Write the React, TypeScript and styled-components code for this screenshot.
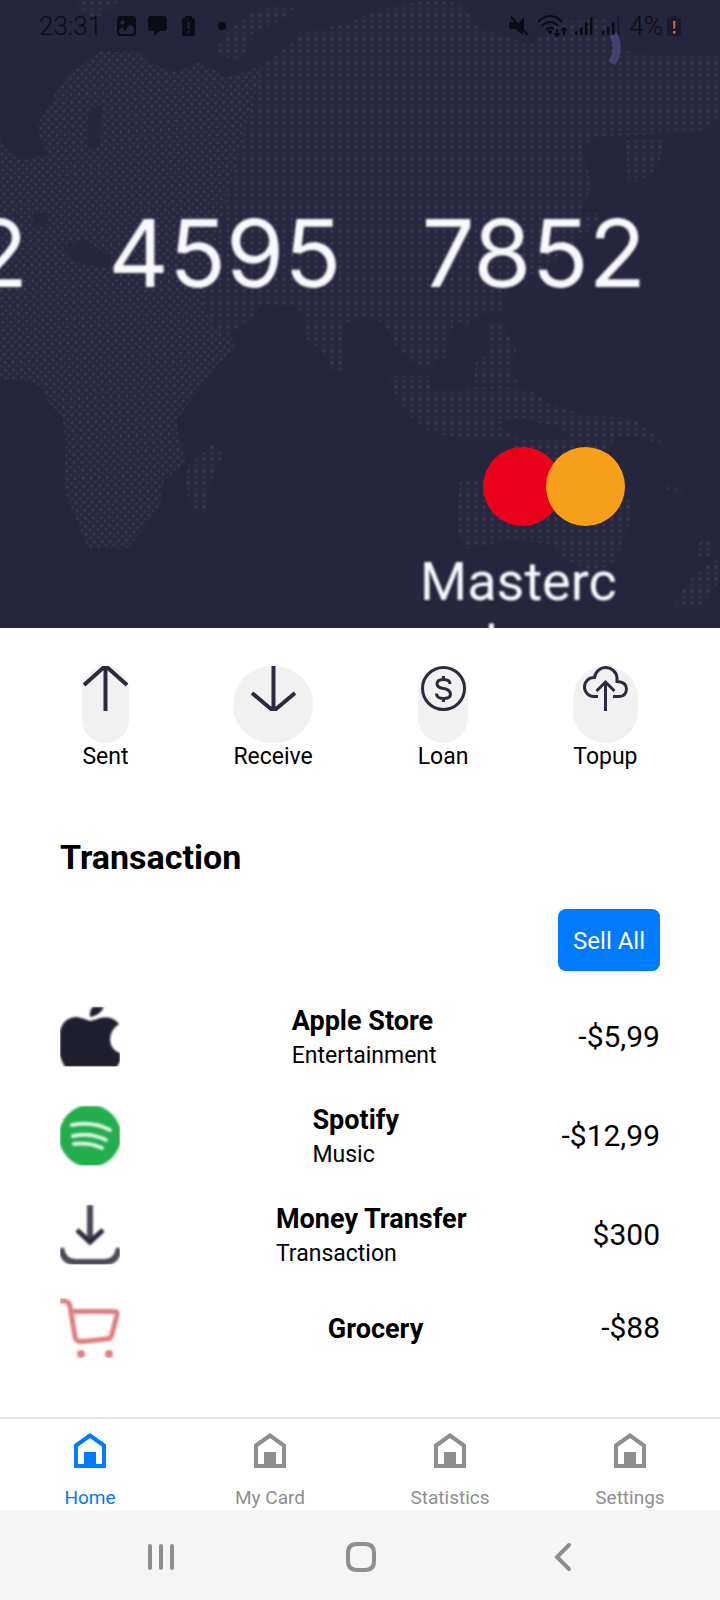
import React from "react";
import styled, { createGlobalStyle } from "styled-components";

const GlobalStyle = createGlobalStyle`
  * { box-sizing: border-box; }
  body { margin: 0; background: #fff; font-family: Roboto, "Liberation Sans", sans-serif; color: #000; }
  button { font: inherit; border: 0; background: none; padding: 0; color: inherit; cursor: pointer; }
  svg { display: block; }
`;

const Screen = styled.div`
  min-height: 100vh;
  display: flex;
  flex-direction: column;
`;

/* ---------- bank card ---------- */

const Card = styled.section`
  position: relative;
  height: 628px;
  overflow: hidden;
  background: #25253d;
  color: #f8f8fa;
  display: flex;
  flex-direction: column;
  align-items: flex-end;
`;

const MapLayer = styled.svg`
  position: absolute;
  inset: 0;
  width: 100%;
  height: 100%;
`;

const StatusBar = styled.header`
  position: absolute;
  top: 0;
  left: 0;
  right: 0;
  height: 52px;
  padding: 0 39px;
  display: flex;
  align-items: center;
  justify-content: space-between;
  color: #0c0c14;
  font-size: 26px;
  line-height: 30px;
  font-weight: 300;
`;

const StatusGroup = styled.div<{ $gap: number }>`
  display: flex;
  align-items: center;
  gap: ${(p) => p.$gap}px;
`;

const CardNumber = styled.div`
  position: relative;
  margin-top: 205px;
  padding-right: 74px;
  display: flex;
  gap: 80px;
  font-family: Inter, Roboto, sans-serif;
  font-size: 94px;
  line-height: 96px;
  filter: blur(1px);
`;

const Brand = styled.div`
  position: relative;
  width: 300px;
  margin-top: 146px;
`;

const BrandMark = styled.svg`
  margin-left: 63px;
`;

const BrandName = styled.div`
  width: 200px;
  margin-top: 24px;
  word-break: break-all;
  font-size: 54px;
  line-height: 64px;
  filter: blur(1px);
`;

const landEast =
  "M262 66L280 52 300 33 345 24 375 12 402 4 436 0 462 4 476 26 500 34 530 45 560 22 606 18 622 50 660 56 720 56V116L700 132 636 135 600 136 582 148 586 164 592 184 580 214 596 212 600 220 580 238 552 264 520 282 504 292 502 312 480 314 466 328 455 320 448 342 446 358 436 360 434 366 420 368 410 360 394 344 388 330 376 318 358 316 344 326 342 372 334 372 322 352 306 338 304 318 296 306 262 304 252 318 236 330 222 338 200 300Z";
const landWest =
  "M0 136L8 152 24 160 34 156 48 156 36 128 52 100 66 76 100 52 140 52 152 64 176 72 200 62 226 78 262 66 216 320 238 346 216 366 194 396 176 420 182 446 186 462 164 480 160 506 144 528 128 548 88 548 72 510 64 488 66 442 62 416 48 402 42 386 24 380 0 380Z";
const smallLands = [
  "M216 48L230 30 246 16 270 6 296 8 284 18 254 34 240 62 222 56Z",
  "M76 0H120L96 18 82 12Z",
  "M626 140H666L658 166 650 174 640 182H628Z",
  "M214 443L223 454 210 484 206 512 192 510 186 484 188 466Z",
  "M486 322H502L516 350 512 372 520 384 474 384 476 362 490 352Z",
  "M388 376H428L432 390 502 386 530 390 548 402 574 412 594 416 632 418 660 440 666 448 640 436 614 436 608 454 586 446 554 426 520 418 498 424 522 440 470 440 430 432 410 416 398 402Z",
  "M460 480H484L520 440 584 440 600 470 632 502 630 524 620 548 616 562 592 572 566 560 552 544 508 540 464 550 458 530 458 510Z",
  "M656 484H670L684 490 682 496Z",
  "M700 540H712V556H698Z",
  "M712 560L720 562V580L700 608 674 608 686 584Z",
];

const WorldMap = () => (
  <MapLayer viewBox="0 0 720 628" preserveAspectRatio="xMidYMid slice" aria-hidden="true">
    <defs>
      <pattern id="rows" width="8" height="12" patternUnits="userSpaceOnUse">
        <rect width="8" height="12" fill="#27273f" />
        <circle cx="4" cy="3" r="1.7" fill="#38384c" />
        <circle cx="4" cy="9" r="1.6" fill="#323248" />
      </pattern>
      <pattern id="weave" width="8" height="8" patternUnits="userSpaceOnUse" patternTransform="rotate(-3)">
        <rect width="8" height="8" fill="#27273f" />
        <circle cx="2" cy="2" r="1.6" fill="#3a3a4e" />
        <circle cx="6" cy="6" r="1.6" fill="#343449" />
      </pattern>
    </defs>
    <path d={landWest} fill="url(#weave)" />
    <path d={landEast} fill="url(#rows)" />
    {smallLands.map((d) => (
      <path key={d} d={d} fill="url(#rows)" />
    ))}
    <path d="M62 246L86 240 112 258 108 268 76 262Z M88 112L102 104 100 146 88 150Z M34 212L48 214 46 228 34 224Z" fill="#25253d" />
    <path d="M613 34Q621 48 612 63" fill="none" stroke="#484678" strokeWidth="8" opacity="0.85" />
  </MapLayer>
);

const Signal = ({ weak }: { weak?: boolean }) => (
  <svg width="19" height="20" viewBox="0 0 19 20" fill="currentColor">
    <rect x="0" y="15" width="2.5" height="4" rx="1" />
    <rect x="5" y="11" width="2.5" height="8" rx="1" />
    <rect x="10" y="6" width="2.5" height="13" rx="1" />
    <rect x="15" y="1" width="2.5" height="18" rx="1" opacity={weak ? 0.35 : 1} />
  </svg>
);

const Status = () => (
  <StatusBar>
    <StatusGroup $gap={14}>
      <span>23:31</span>
      <svg width="88" height="20" viewBox="0 0 88 20" fill="currentColor">
        <path fillRule="evenodd" d="M4 0H16Q20 0 20 4V16Q20 20 16 20H4Q1 20 1 16V4Q1 0 4 0ZM3 16Q3 18 5 18H16Q18 18 18 16V12L14 8 9 15 6 11 3 14ZM6.500 4.500A2 2 0 1 0 6.500 8.500A2 2 0 1 0 6.500 4.500Z" />
        <path d="M35 0H47Q51 0 51 4V12Q51 15 47 15H44L38 20V15H35Q32 15 32 12V4Q32 0 35 0Z" />
        <path fillRule="evenodd" d="M69 2V0H76V2H77Q79 2 79 4V18Q79 20 77 20H68Q66 20 66 18V4Q66 2 68 2ZM71.500 6V13H73.500V6ZM71.500 15V17H73.500V15Z" />
      </svg>
      <svg width="8" height="8" viewBox="0 0 8 8" fill="currentColor">
        <circle cx="4" cy="4" r="4" />
      </svg>
    </StatusGroup>
    <StatusGroup $gap={8}>
      <svg width="20" height="20" viewBox="0 0 20 20" fill="currentColor">
        <path d="M15 1V14L9 8ZM2 6H6L14 14V19L6 13H2Q0 13 0 11V8Q0 6 2 6Z" />
        <path d="M2 1L19 19" stroke="currentColor" strokeWidth="2" />
      </svg>
      <svg width="30" height="22" viewBox="0 0 30 22" fill="none" stroke="currentColor" strokeWidth="2">
        <path d="M1 7Q13 -5 25 7M5 11Q13 3 21 11M9 15Q13 11 17 14" />
        <circle cx="13" cy="17" r="1" />
        <path d="M20 14V21M17 18L20 21 23 18M27 20V13M24 16L27 13 30 16" />
      </svg>
      <Signal />
      <Signal weak />
      <StatusGroup $gap={4}>
        <span>4%</span>
        <svg width="14" height="20" viewBox="0 0 14 20">
          <path d="M4 0H10V2H12Q14 2 14 4V18Q14 20 12 20H2Q0 20 0 18V4Q0 2 2 2H4Z" fill="#1b1a28" />
          <path d="M6 5H8.500L8 13H6.500ZM6 15H8.500V17.500H6Z" fill="#c9694f" />
        </svg>
      </StatusGroup>
    </StatusGroup>
  </StatusBar>
);

/* ---------- quick actions ---------- */

const Actions = styled.nav`
  padding: 38px 30px 0;
  display: flex;
  justify-content: space-around;
`;

const Action = styled.button`
  display: flex;
  flex-direction: column;
  font-size: 23px;
  line-height: 28px;
`;

const ActionPill = styled.span`
  width: 100%;
  height: 77px;
  border-radius: 40px;
  background: #f1f1f1;
  display: flex;
  justify-content: center;
  align-items: flex-start;
`;

const IconSvg = styled.svg`
  fill: none;
  stroke: #2b2b3d;
  stroke-width: 3;
`;

const actions = [
  { label: "Sent", icon: <path d="M22.500 45V1M1 19L20 2Q22.500 0 25 2L44 19" strokeWidth="4" /> },
  { label: "Receive", icon: <path d="M22.500 0V44M1 27L20 43Q22.500 45 25 43L44 27" strokeWidth="4" /> },
  {
    label: "Loan",
    icon: (
      <>
        <circle cx="22.500" cy="22.500" r="21" />
        <path d="M29 18Q29 13.500 22.500 13.500T16 18Q16 21.500 22.500 22.500T29.500 28Q29.500 32.500 22.500 32.500T15.500 27.500M22.500 10V13M22.500 32V36" />
      </>
    ),
  },
  {
    label: "Topup",
    icon: (
      <>
        <path d="M15 30.500H11A9.500 9.500 0 0 1 11 11.500H11.500A11.300 11.300 0 0 1 34 12V15.500Q43.500 16 43.500 23Q43 30.500 36 30.500H30" />
        <path d="M22.500 45V16M13.500 25L22.500 16 31.500 25" />
      </>
    ),
  },
];

/* ---------- transactions ---------- */

const Transactions = styled.main`
  flex: 1;
  padding: 66px 60px 58px;
  display: flex;
  flex-direction: column;
`;

const Heading = styled.h1`
  margin: 0;
  font-size: 34px;
  line-height: 40px;
  font-weight: 700;
`;

const SellAll = styled.button`
  align-self: flex-end;
  margin-top: 32px;
  height: 62px;
  padding: 2px 15px 0;
  border-radius: 8px;
  background: #007aff;
  color: #fff;
  font-size: 24px;
`;

const List = styled.ul`
  list-style: none;
  margin: 30px 0 0;
  padding: 0;
  display: flex;
  flex-direction: column;
  gap: 28px;
`;

const Row = styled.li`
  display: flex;
  align-items: center;
  justify-content: space-between;
`;

const Thumb = styled.svg`
  flex: none;
  width: 60px;
  height: 60px;
  margin-right: 30px;
  filter: blur(1px);
  clip-path: inset(0);
`;

const Name = styled.div`
  padding-top: 2px;
  font-size: 27px;
  line-height: 36px;
  font-weight: 700;
`;

const Category = styled.div`
  font-size: 23px;
  line-height: 33px;
`;

const Amount = styled.div`
  font-size: 30px;
  line-height: 36px;
`;

const transactions = [
  {
    name: "Apple Store",
    category: "Entertainment",
    amount: "-$5,99",
    icon: (
      <g fill="#1f1e2c">
        <path d="M30 9Q29 3 35 -3H45Q42 8 30 10Z" />
        <path d="M30 14Q35 13 40 11Q52 8 59 17Q50 23 50 33Q51 44 62 47Q60 56 55 63H7Q-3 50 -1 30Q1 10 17 10Q23 11 30 14Z" />
      </g>
    ),
  },
  {
    name: "Spotify",
    category: "Music",
    amount: "-$12,99",
    icon: (
      <>
        <circle cx="30" cy="30" r="31" fill="#22ae4c" />
        <g fill="none" stroke="#d9f3e0" strokeLinecap="round">
          <path d="M12 19Q33 15 50 24" strokeWidth="4" />
          <path d="M13 30Q31 26 46 34" strokeWidth="4" />
          <path d="M14 38Q29 36 42 42" strokeWidth="4" />
        </g>
      </>
    ),
  },
  {
    name: "Money Transfer",
    category: "Transaction",
    amount: "$300",
    icon: (
      <g fill="none" stroke="#4a4958" strokeWidth="6">
        <path d="M30 -3V36" />
        <path d="M17 25L30 37 43 25" stroke="#2b2b3d" strokeWidth="5" />
        <path d="M1 43Q3 57 15 57H45Q57 57 59 43" />
      </g>
    ),
  },
  {
    name: "Grocery",
    amount: "-$88",
    icon: (
      <g fill="none" stroke="#e37e7f" strokeWidth="5" strokeLinejoin="round">
        <path d="M-2 3H5Q9 4 10 8L15 39Q16 44 22 43.500L46 41Q51 41 52 36L57 17Q58 13 53 13.500H12" />
        <circle cx="21" cy="56" r="2" strokeWidth="4" />
        <circle cx="49" cy="56" r="2" strokeWidth="4" />
      </g>
    ),
  },
];

/* ---------- bottom bars ---------- */

const TabBar = styled.nav`
  border-top: 2px solid #e4e4e4;
  height: 93px;
  display: grid;
  grid-template-columns: repeat(4, 1fr);
`;

const Tab = styled.a<{ $active?: boolean }>`
  display: flex;
  flex-direction: column;
  align-items: center;
  gap: 18px;
  padding-top: 14px;
  text-decoration: none;
  color: ${(p) => (p.$active ? "#007aff" : "#8e8e8f")};
  font-size: 19px;
  line-height: 24px;
`;

const SystemNav = styled.nav`
  height: 90px;
  padding: 4px 60px 0 62px;
  background: #f5f5f5;
  display: grid;
  grid-template-columns: repeat(3, 1fr);
  align-items: center;
  justify-items: center;
`;

const SystemIcon = styled.svg`
  fill: none;
  stroke: #8f8f8f;
  stroke-width: 4;
  stroke-linecap: round;
`;

const systemButtons = [
  { label: "Recent apps", d: "M4 5V27M15 5V27M26 5V27" },
  { label: "Home screen", d: "M12 3H20Q29 3 29 12V20Q29 29 20 29H12Q3 29 3 20V12Q3 3 12 3Z" },
  { label: "Back", d: "M25 4L13 16 25 28" },
];

export default function App() {
  return (
    <Screen>
      <GlobalStyle />
      <Card>
        <WorldMap />
        <Status />
        <CardNumber>
          <span>2</span>
          <span>4595</span>
          <span>7852</span>
        </CardNumber>
        <Brand>
          <BrandMark width="142" height="79" viewBox="0 0 142 79" aria-hidden="true">
            <circle cx="39.500" cy="39.500" r="39.500" fill="#eb001b" />
            <circle cx="102.500" cy="39.500" r="39.500" fill="#f79f1a" />
          </BrandMark>
          <BrandName>Mastercard</BrandName>
        </Brand>
      </Card>

      <Actions aria-label="Quick actions">
        {actions.map((a) => (
          <Action key={a.label} type="button">
            <ActionPill>
              <IconSvg width="45" height="45" viewBox="0 0 45 45">
                {a.icon}
              </IconSvg>
            </ActionPill>
            {a.label}
          </Action>
        ))}
      </Actions>

      <Transactions>
        <Heading>Transaction</Heading>
        <SellAll type="button">Sell All</SellAll>
        <List>
          {transactions.map((t) => (
            <Row key={t.name}>
              <Thumb viewBox="0 0 60 60">{t.icon}</Thumb>
              <div>
                <Name>{t.name}</Name>
                {t.category && <Category>{t.category}</Category>}
              </div>
              <Amount>{t.amount}</Amount>
            </Row>
          ))}
        </List>
      </Transactions>

      <TabBar aria-label="Main">
        {["Home", "My Card", "Statistics", "Settings"].map((label, i) => (
          <Tab key={label} href={`#${label}`} $active={i === 0}>
            <svg width="32" height="35" viewBox="0 0 32 35">
              <path d="M2 12.500L16 2.500 30 12.500V33H2Z" fill="none" stroke="currentColor" strokeWidth="4" />
              <rect x="10" y="19" width="12" height="15" fill="currentColor" />
            </svg>
            {label}
          </Tab>
        ))}
      </TabBar>

      <SystemNav aria-label="System">
        {systemButtons.map((b) => (
          <button key={b.label} type="button" aria-label={b.label}>
            <SystemIcon width="32" height="32" viewBox="0 0 32 32">
              <path d={b.d} />
            </SystemIcon>
          </button>
        ))}
      </SystemNav>
    </Screen>
  );
}
